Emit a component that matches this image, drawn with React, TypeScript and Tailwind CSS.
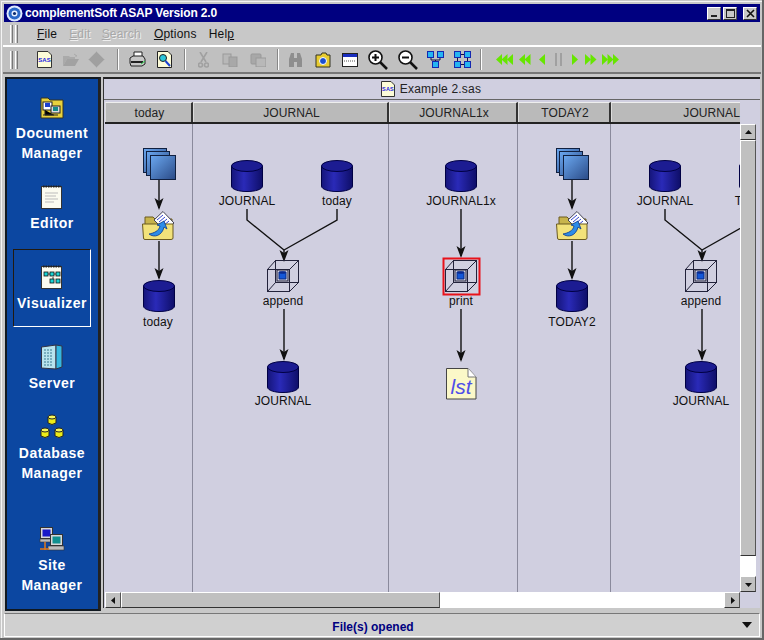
import type { ReactNode } from "react";

const raised = "border border-t-white border-l-white border-r-[#555] border-b-[#333]";

function Cylinder({ size = 32 }: { size?: number }) {
  return (
    <svg width={size} height={size} viewBox="0 0 32 32">
      <defs>
        <linearGradient id="cyl" x1="0" x2="1" y1="0" y2="0">
          <stop offset="0" stopColor="#15157a" />
          <stop offset="0.4" stopColor="#2a2ab8" />
          <stop offset="1" stopColor="#0e0e68" />
        </linearGradient>
      </defs>
      <path d="M0.5 6 V26 C0.5 29.5 8 31.5 16 31.5 S31.5 29.5 31.5 26 V6 Z" fill="url(#cyl)" stroke="#000044" />
      <ellipse cx="16" cy="6" rx="15.5" ry="5.5" fill="#1c1c92" stroke="#000044" />
    </svg>
  );
}

function Cube() {
  return (
    <svg width="33" height="33" viewBox="0 0 33 33" fill="none" stroke="#22223a" strokeWidth="1">
      <rect x="8.5" y="0.5" width="23" height="22" />
      <rect x="0.5" y="9.5" width="22" height="22" />
      <path d="M0.5 9.5 L8.5 0.5 M22.5 9.5 L31.5 0.5 M0.5 31.5 L8.5 22.5 M22.5 31.5 L31.5 22.5" />
      <rect x="10" y="10" width="11" height="11" stroke="#22223a" />
      <path d="M12 12 H19 V19 H12 Z" fill="#1457d8" stroke="#0a2a80" />
      <ellipse cx="15.5" cy="12.5" rx="3.5" ry="1.3" fill="#0a2a90" stroke="none" />
    </svg>
  );
}

function Stack() {
  return (
    <svg width="33" height="33" viewBox="0 0 33 33">
      <defs>
        <linearGradient id="stk" x1="0" x2="1" y1="0" y2="1">
          <stop offset="0" stopColor="#6ba8f0" />
          <stop offset="1" stopColor="#2a4a86" />
        </linearGradient>
      </defs>
      <rect x="0.5" y="0.5" width="23" height="24" fill="url(#stk)" stroke="#102040" />
      <rect x="3.5" y="3.5" width="23" height="24" fill="url(#stk)" stroke="#102040" />
      <rect x="7.5" y="7.5" width="25" height="24" fill="url(#stk)" stroke="#102040" />
    </svg>
  );
}

function OpenFolder() {
  return (
    <svg width="33" height="30" viewBox="0 0 33 30">
      <path d="M3 6 H11 L13 8 H30 V26 H3 Z" fill="#c8b44c" stroke="#6a5a20" />
      <path d="M12 9 L21 0.5 L32 12 L23 20 Z" fill="#fff" stroke="#445" />
      <path d="M15 9 L21 4 M17 11 L23 6 M19 13 L25 8 M21 15 L27 10" stroke="#3344cc" />
      <path d="M0.5 13 H31 V27 Q31 28.5 29 28.5 H3 Q1.5 28.5 1.5 27 Z" fill="#f2e27a" stroke="#6a5a20" />
      <path d="M7 23 C12 27 20 25 22 16 L25 18 L22 10 L15 14 L18 15 C17 20 12 22 7 23 Z" fill="#2d8ce8" stroke="#0b3a8a" strokeWidth="0.8" />
    </svg>
  );
}

function LstDoc() {
  return (
    <svg width="31" height="32" viewBox="0 0 31 32">
      <path d="M0.5 0.5 H22 L30 9 V31 H0.5 Z" fill="#fbf8c8" stroke="#444" />
      <path d="M22 0.5 V9 H30" fill="#fff" stroke="#777" />
      <text x="15" y="26" textAnchor="middle" fontFamily="'Liberation Sans', sans-serif" fontStyle="italic" fontSize="21" fill="#4f4fe8">lst</text>
    </svg>
  );
}

function Folder() {
  return (
    <svg width="24" height="24" viewBox="0 0 24 24">
      <path d="M1 3 H8 L10 5 H23 V23 H1 Z" fill="#e8d23c" stroke="#332" />
      <rect x="3" y="7" width="9" height="8" fill="#fff" stroke="#222" />
      <rect x="5" y="8" width="5" height="4" fill="#1a3fd0" />
      <rect x="11" y="11" width="9" height="7" fill="#ddd" stroke="#222" />
      <rect x="13" y="12" width="5" height="4" fill="#138a8a" />
      <path d="M5 15 V20 H14 M3 20 H18" stroke="#222" />
    </svg>
  );
}

function Notebook({ flow = false }: { flow?: boolean }) {
  return (
    <svg width="22" height="24" viewBox="0 0 22 24">
      <rect x="0.5" y="1.5" width="20" height="22" fill="#fbfbf0" stroke="#333" />
      <path d="M2 1.5 H20" stroke="#222" strokeWidth="2" strokeDasharray="1.5 1" />
      {flow ? (
        <g fill="#19d4d4" stroke="#111" strokeWidth="0.8">
          <path d="M7 9 H11 M15 9 H13 M12 12 V15" fill="none" />
          <rect x="3" y="7" width="4" height="4" />
          <rect x="9" y="7" width="4" height="4" />
          <rect x="15" y="7" width="4" height="4" />
          <rect x="9" y="14" width="4" height="4" />
          <rect x="15" y="14" width="4" height="4" />
        </g>
      ) : (
        <path d="M4 8 H17 M4 11 H15 M4 14 H17 M4 17 H13" stroke="#bbb" />
      )}
    </svg>
  );
}

function ServerIcon() {
  return (
    <svg width="22" height="26" viewBox="0 0 22 26">
      <path d="M0.5 3 L15 1 V25 L0.5 24 Z" fill="#b8e4ee" stroke="#334" />
      <path d="M15 1 L21 2 V23 L15 25 Z" fill="#35b7e0" stroke="#334" />
      <path d="M3 6 H12 M3 9 H12 M3 12 H12 M3 15 H12 M3 18 H12 M3 21 H12" stroke="#3a7a90" strokeDasharray="2 1" />
    </svg>
  );
}

function DbIcon() {
  const can = (x: number, y: number) => (
    <g key={`${x}-${y}`}>
      <path d={`M${x} ${y + 2} V${y + 8} Q${x + 4} ${y + 11} ${x + 8} ${y + 8} V${y + 2} Z`} fill="#ecec18" stroke="#222" />
      <ellipse cx={x + 4} cy={y + 2} rx="4" ry="2" fill="#f7f75a" stroke="#222" />
    </g>
  );
  return (
    <svg width="24" height="26" viewBox="0 0 24 26">
      {can(8, 1)}
      {can(1, 14)}
      {can(15, 14)}
    </svg>
  );
}

function SiteIcon() {
  return (
    <svg width="26" height="26" viewBox="0 0 26 26">
      <rect x="1.5" y="1.5" width="12" height="11" fill="#d8d8d8" stroke="#333" />
      <rect x="3.5" y="3.5" width="8" height="7" fill="#1818c8" />
      <rect x="1" y="13" width="12" height="3" fill="#bbb" stroke="#333" strokeWidth="0.6" />
      <rect x="11.5" y="8.5" width="12" height="11" fill="#d8d8d8" stroke="#333" />
      <rect x="13.5" y="10.5" width="8" height="7" fill="#109090" />
      <rect x="9" y="20" width="16" height="4" fill="#bbb" stroke="#333" strokeWidth="0.6" />
      <path d="M6 16 V24 M1 23 H10" stroke="#e07818" strokeWidth="1.5" />
    </svg>
  );
}

type NavItem = { lines: string[]; icon: ReactNode; height: string; active?: boolean };

const navItems: NavItem[] = [
  { lines: ["Document", "Manager"], icon: <Folder />, height: "h-[90px]" },
  { lines: ["Editor"], icon: <Notebook />, height: "h-[80px]" },
  { lines: ["Visualizer"], icon: <Notebook flow />, height: "h-[78px] mb-[2px]", active: true },
  { lines: ["Server"], icon: <ServerIcon />, height: "h-[70px]" },
  { lines: ["Database", "Manager"], icon: <DbIcon />, height: "h-[112px]" },
  { lines: ["Site", "Manager"], icon: <SiteIcon />, height: "h-[90px]" },
];

function Sidebar() {
  return (
    <div className="mb-[2px] flex w-[96px] shrink-0 flex-col overflow-hidden border-2 border-r-[3px] border-[#101820] border-r-[#222] bg-[#0c47a1]">
      {navItems.map((item) => (
        <div
          key={item.lines[0]}
          className={`mx-[6px] flex w-[78px] shrink-0 flex-col items-center pt-[15px] ${item.height} ${
            item.active ? "border border-t-[#221a10] border-l-[#221a10] border-r-white border-b-white" : "border border-transparent"
          }`}
        >
          <div className="flex h-[24px] items-center justify-center">{item.icon}</div>
          <div className="mt-[4px] text-center text-[14px] leading-[20px] font-bold tracking-[0.5px] whitespace-nowrap text-white">
            {item.lines.map((l) => (
              <div key={l}>{l}</div>
            ))}
          </div>
        </div>
      ))}
    </div>
  );
}

function Arrows({ n, dir }: { n: number; dir: 1 | -1 }) {
  const step = 5.5;
  const w = n * step + 1;
  return (
    <svg width={w} height="13" viewBox={`0 0 ${w} 13`}>
      {Array.from({ length: n }, (_, i) => {
        const x = i * step;
        const d = dir === 1 ? `M${x} 1 L${x + 6} 6.5 L${x} 12 Z` : `M${x + 6} 1 L${x} 6.5 L${x + 6} 12 Z`;
        return <path key={i} d={d} fill="#66e600" />;
      })}
    </svg>
  );
}

function Sep({ ml = "ml-[12px]" }: { ml?: string }) {
  return <div className={`${ml} h-[21px] w-[2px] border-r border-l border-r-white border-l-[#888]`} />;
}

function Tool({ ml, children }: { ml: string; children: ReactNode }) {
  return <div className={`flex h-[20px] items-center justify-center ${ml}`}>{children}</div>;
}

function Grip() {
  return (
    <div className="ml-[7px] flex gap-[2px]">
      <div className="h-[18px] w-[3px] border-r border-l border-r-[#777] border-l-white" />
      <div className="h-[18px] w-[3px] border-r border-l border-r-[#777] border-l-white" />
    </div>
  );
}

function Magnifier({ plus }: { plus: boolean }) {
  return (
    <svg width="20" height="20" viewBox="0 0 20 20" fill="none">
      <path d="M11 11 L19 19" stroke="#111" strokeWidth="2.5" />
      <circle cx="7.5" cy="7.5" r="6.5" fill="#fff" stroke="#111" strokeWidth="1.6" />
      <path d={plus ? "M4 7.5 H11 M7.5 4 V11" : "M4 7.5 H11"} stroke="#111" strokeWidth="2" />
    </svg>
  );
}

function Toolbar() {
  return (
    <div className="flex h-[29px] items-center border-t-2 border-b-2 border-t-white border-b-[#777] bg-[#c0c0c0]">
      <Grip />
      <Tool ml="ml-[19px]">
        <svg width="15" height="17" viewBox="0 0 15 17">
          <path d="M0.5 0.5 H11 L14.5 4 V16.5 H0.5 Z" fill="#fdfcd8" stroke="#333" />
          <text x="7.5" y="10.5" textAnchor="middle" fontSize="6" fontWeight="700" fontFamily="'Liberation Sans', sans-serif" fill="#1a1ae0">SAS</text>
        </svg>
      </Tool>
      <Tool ml="ml-[10px]">
        <svg width="17" height="14" viewBox="0 0 17 14">
          <path d="M1 3 H7 L8 4 H13 V6 H5 L1 13 Z" fill="#aaa" />
          <path d="M5 6 H17 L13 13 H1 Z" fill="#a2a2a2" />
          <path d="M12 1 L15 3 L13 3" fill="none" stroke="#aaa" />
        </svg>
      </Tool>
      <Tool ml="ml-[9px]">
        <svg width="17" height="17" viewBox="0 0 17 17">
          <path d="M8.5 0.5 L16.5 8.5 L8.5 16.5 L0.5 8.5 Z" fill="#a0a0a0" stroke="#b4b4b4" />
        </svg>
      </Tool>
      <Sep />
      <Tool ml="ml-[10px]">
        <svg width="17" height="17" viewBox="0 0 17 17">
          <path d="M5 1 H13 V6 H5 Z" fill="#fff" stroke="#222" />
          <path d="M1 7 L4 5 H14 L16 8 V13 L13 15 H2 L1 12 Z" fill="#c8c8c8" stroke="#222" />
          <path d="M2 11 H14" stroke="#222" strokeWidth="2" />
          <path d="M12 13 L16 10" stroke="#2c4" />
        </svg>
      </Tool>
      <Tool ml="ml-[11px]">
        <svg width="15" height="17" viewBox="0 0 15 17">
          <path d="M0.5 0.5 H11 L14.5 4 V16.5 H0.5 Z" fill="#fdfcd8" stroke="#222" />
          <circle cx="6" cy="7" r="3.5" fill="#2cc7d8" stroke="#222" />
          <path d="M8.5 10 L13 15" stroke="#1a3fd0" strokeWidth="2" />
        </svg>
      </Tool>
      <Sep />
      <Tool ml="ml-[12px]">
        <svg width="11" height="16" viewBox="0 0 11 16" fill="none" stroke="#a0a0a0" strokeWidth="1.6">
          <path d="M2 0 L8 10 M9 0 L3 10" />
          <circle cx="2.5" cy="13" r="2" />
          <circle cx="8.5" cy="13" r="2" />
        </svg>
      </Tool>
      <Tool ml="ml-[13px]">
        <svg width="16" height="14" viewBox="0 0 16 14">
          <rect x="1" y="1" width="8" height="10" fill="#b8b8b8" stroke="#999" />
          <rect x="7" y="4" width="8" height="10" fill="#a8a8a8" stroke="#999" />
        </svg>
      </Tool>
      <Tool ml="ml-[12px]">
        <svg width="16" height="14" viewBox="0 0 16 14">
          <rect x="1" y="1" width="10" height="10" rx="1" fill="#a8a8a8" stroke="#999" />
          <rect x="6" y="5" width="10" height="9" fill="#b8b8b8" stroke="#999" />
        </svg>
      </Tool>
      <Sep ml="ml-[11px]" />
      <Tool ml="ml-[9px]">
        <svg width="15" height="16" viewBox="0 0 15 16">
          <path d="M1 7 L3 1 H6 V6 H9 V1 H12 L14 7 V15 H9 V10 H6 V15 H1 Z" fill="#8e8e8e" />
        </svg>
      </Tool>
      <Tool ml="ml-[12px]">
        <svg width="16" height="16" viewBox="0 0 16 16">
          <path d="M1 3 H6 L7 1 H11 L12 3 H15 V15 H1 Z" fill="#e8cc30" stroke="#332" />
          <circle cx="8" cy="9" r="3.5" fill="#1a4fd0" stroke="#fff" />
        </svg>
      </Tool>
      <Tool ml="ml-[11px]">
        <svg width="16" height="14" viewBox="0 0 16 14">
          <rect x="0.5" y="0.5" width="15" height="13" fill="#fff" stroke="#222" />
          <rect x="1" y="1" width="14" height="3" fill="#1a2fc0" />
          <path d="M2 8 H14" stroke="#555" strokeDasharray="1 1" />
        </svg>
      </Tool>
      <Tool ml="ml-[10px]">
        <Magnifier plus />
      </Tool>
      <Tool ml="ml-[10px]">
        <Magnifier plus={false} />
      </Tool>
      <Tool ml="ml-[9px]">
        <svg width="17" height="17" viewBox="0 0 17 17">
          <path d="M4 6 V9 H13 V6 M8.5 9 V11" stroke="#114" fill="none" />
          <rect x="0.5" y="0.5" width="6" height="6" fill="#25b5f2" stroke="#1427b0" />
          <rect x="10.5" y="0.5" width="6" height="6" fill="#25b5f2" stroke="#1427b0" />
          <rect x="5.5" y="10.5" width="6" height="6" fill="#25b5f2" stroke="#1427b0" />
        </svg>
      </Tool>
      <Tool ml="ml-[10px]">
        <svg width="17" height="17" viewBox="0 0 17 17">
          <path d="M7 3.5 H10 M3.5 7 V10 M13.5 7 V10 M7 13.5 H10" stroke="#114" fill="none" />
          <rect x="0.5" y="0.5" width="6" height="6" fill="#25b5f2" stroke="#1427b0" />
          <rect x="10.5" y="0.5" width="6" height="6" fill="#25b5f2" stroke="#1427b0" />
          <rect x="0.5" y="10.5" width="6" height="6" fill="#25b5f2" stroke="#1427b0" />
          <rect x="10.5" y="10.5" width="6" height="6" fill="#25b5f2" stroke="#1427b0" />
        </svg>
      </Tool>
      <Sep ml="ml-[9px]" />
      <Tool ml="ml-[14px]">
        <Arrows n={3} dir={-1} />
      </Tool>
      <Tool ml="ml-[5px]">
        <Arrows n={2} dir={-1} />
      </Tool>
      <Tool ml="ml-[8px]">
        <Arrows n={1} dir={-1} />
      </Tool>
      <Tool ml="ml-[10px]">
        <div className="flex gap-[3px]">
          <div className="h-[13px] w-[2px] bg-[#a0a0a0]" />
          <div className="h-[13px] w-[2px] bg-[#a0a0a0]" />
        </div>
      </Tool>
      <Tool ml="ml-[10px]">
        <Arrows n={1} dir={1} />
      </Tool>
      <Tool ml="ml-[6px]">
        <Arrows n={2} dir={1} />
      </Tool>
      <Tool ml="ml-[5px]">
        <Arrows n={3} dir={1} />
      </Tool>
    </div>
  );
}

function Menu() {
  const items = [
    { label: "File", key: "F", ml: "ml-[19px]" },
    { label: "Edit", key: "E", ml: "ml-[12px]", off: true },
    { label: "Search", key: "S", ml: "ml-[11px]", off: true },
    { label: "Options", key: "O", ml: "ml-[13px]" },
    { label: "Help", key: "p", ml: "ml-[12px]" },
  ];
  return (
    <div className="flex h-[23px] items-center bg-[#c8c8c8] pt-[1px]">
      <Grip />
      {items.map((m) => {
        const i = m.label.indexOf(m.key);
        return (
          <span
            key={m.label}
            className={`${m.ml} text-[12px] tracking-[0.2px] ${m.off ? "text-[#a8a8a8] [text-shadow:1px_1px_0_#eee]" : "text-[#111]"}`}
          >
            {m.label.slice(0, i)}
            <span className="underline">{m.key}</span>
            {m.label.slice(i + 1)}
          </span>
        );
      })}
    </div>
  );
}

const columns = [
  { label: "today", w: "w-[88px]", align: "justify-center pl-[2px]" },
  { label: "JOURNAL", w: "w-[196px]", align: "justify-center pl-[2px]" },
  { label: "JOURNAL1x", w: "w-[129px]", align: "justify-center pl-[2px]" },
  { label: "TODAY2", w: "w-[93px]", align: "justify-center pl-[2px]" },
  { label: "JOURNAL", w: "flex-1", align: "justify-end" },
];

type DiagNode = { x: number; y: number; el: ReactNode };
type DiagLabel = { x: number; y: number; text: string };

// page coordinates, shifted by the canvas origin (105,124)
const ox = 105;
const oy = 124;

const nodes: DiagNode[] = [
  { x: 143, y: 148, el: <Stack /> },
  { x: 142, y: 211, el: <OpenFolder /> },
  { x: 143, y: 280, el: <Cylinder /> },
  { x: 231, y: 160, el: <Cylinder /> },
  { x: 321, y: 160, el: <Cylinder /> },
  { x: 267, y: 260, el: <Cube /> },
  { x: 267, y: 361, el: <Cylinder /> },
  { x: 445, y: 160, el: <Cylinder /> },
  { x: 445, y: 260, el: <Cube /> },
  { x: 446, y: 368, el: <LstDoc /> },
  { x: 556, y: 148, el: <Stack /> },
  { x: 556, y: 211, el: <OpenFolder /> },
  { x: 556, y: 280, el: <Cylinder /> },
  { x: 649, y: 160, el: <Cylinder /> },
  { x: 739, y: 160, el: <Cylinder /> },
  { x: 685, y: 260, el: <Cube /> },
  { x: 685, y: 361, el: <Cylinder /> },
];

const labels: DiagLabel[] = [
  { x: 158, y: 322, text: "today" },
  { x: 247, y: 201, text: "JOURNAL" },
  { x: 337, y: 201, text: "today" },
  { x: 283, y: 301, text: "append" },
  { x: 283, y: 401, text: "JOURNAL" },
  { x: 461, y: 201, text: "JOURNAL1x" },
  { x: 461, y: 301, text: "print" },
  { x: 572, y: 322, text: "TODAY2" },
  { x: 665, y: 201, text: "JOURNAL" },
  { x: 755, y: 201, text: "TODAY" },
  { x: 701, y: 301, text: "append" },
  { x: 701, y: 401, text: "JOURNAL" },
];

const lines = [
  "M159 180 V208",
  "M159 241 V278",
  "M247 209 V220 L284 250",
  "M337 209 V220 L284 250",
  "M284 250 V258",
  "M284 309 V359",
  "M461 209 V256",
  "M461 309 V360",
  "M572 180 V208",
  "M572 241 V278",
  "M665 209 V220 L702 250",
  "M755 209 V220 L702 250",
  "M702 250 V258",
  "M702 309 V359",
];

const arrowHeads: [number, number][] = [
  [159, 210],
  [159, 280],
  [284, 262],
  [284, 361],
  [461, 258],
  [461, 362],
  [572, 210],
  [572, 280],
  [702, 262],
  [702, 361],
];

function Canvas() {
  return (
    <div className="relative flex-1 overflow-hidden bg-[#d0cfe0]">
      <div className="absolute inset-0 flex">
        {columns.map((c, i) => (
          <div key={i} className={`${c.w} ${i < 4 ? "border-r border-r-[#8a8a9c]" : ""}`} />
        ))}
      </div>
      <svg className="absolute inset-0" width="635" height="468" viewBox={`${ox} ${oy} 635 468`} fill="none">
        {lines.map((d) => (
          <path key={d} d={d} stroke="#111" strokeWidth="1.4" />
        ))}
        {arrowHeads.map(([x, y]) => (
          <path key={`${x}-${y}`} d={`M${x - 4.5} ${y - 12} L${x} ${y - 9} L${x + 4.5} ${y - 12} L${x} ${y} Z`} fill="#111" />
        ))}
        <rect x="443.5" y="258.5" width="36" height="36" stroke="#e8121a" strokeWidth="2" />
      </svg>
      {nodes.map((n, i) => (
        <div key={i} className="absolute" style={{ left: n.x - ox, top: n.y - oy }}>
          {n.el}
        </div>
      ))}
      {labels.map((l, i) => (
        <div
          key={i}
          className="absolute -translate-x-1/2 -translate-y-1/2 text-[12px] leading-[14px] tracking-[0.1px] whitespace-nowrap text-[#111]"
          style={{ left: l.x - ox, top: l.y - oy }}
        >
          {l.text}
        </div>
      ))}
    </div>
  );
}

function ScrollBtn({ dir, className = "" }: { dir: "up" | "down" | "left" | "right"; className?: string }) {
  const d = {
    up: "M1 6 L4.5 2 L8 6 Z",
    down: "M1 3 L8 3 L4.5 7 Z",
    left: "M6 1 L6 8 L2 4.5 Z",
    right: "M3 1 L3 8 L7 4.5 Z",
  }[dir];
  return (
    <div className={`flex h-[16px] w-[16px] shrink-0 items-center justify-center bg-[#c0c0c0] ${raised} ${className}`}>
      <svg width="9" height="9" viewBox="0 0 9 9">
        <path d={d} fill="#111" />
      </svg>
    </div>
  );
}

function MainPanel() {
  return (
    <div className="mb-[5px] ml-[2px] flex flex-1 flex-col border-t-2 border-l border-t-[#222] border-l-[#333] bg-[#d0cfe0]">
      <div className="flex h-[21px] shrink-0 items-center justify-center border-b border-b-[#666] pr-[2px] text-[12px] tracking-[0.2px] text-[#222]">
        <svg className="mr-[5px]" width="14" height="16" viewBox="0 0 14 16">
          <path d="M0.5 0.5 H10 L13.5 4 V15.5 H0.5 Z" fill="#fdfcd8" stroke="#333" />
          <text x="7" y="10" textAnchor="middle" fontSize="5.5" fontWeight="700" fontFamily="'Liberation Sans', sans-serif" fill="#1a1ae0">SAS</text>
        </svg>
        Example 2.sas
      </div>
      <div className="flex flex-1 flex-col pt-[2px] pl-[1px]">
        <div className="flex h-[22px] w-[635px] shrink-0 border-b-2 border-b-[#222]">
          {columns.map((c, i) => (
            <div
              key={i}
              className={`flex ${c.w} ${c.align} items-center border-t border-l border-t-[#eee] border-l-[#ddd] bg-[#bababa] text-[12px] tracking-[0.1px] text-[#222] ${
                i < 4 ? "border-r-2 border-r-[#333]" : ""
              }`}
            >
              {c.label}
            </div>
          ))}
        </div>
        <div className="flex flex-1">
          <div className="flex w-[635px] flex-col">
            <Canvas />
            <div className="flex h-[16px] shrink-0 items-stretch bg-white">
              <ScrollBtn dir="left" />
              <div className={`h-[16px] w-[319px] bg-[#c0c0c0] ${raised}`} />
              <div className="flex-1" />
              <ScrollBtn dir="right" />
            </div>
          </div>
          <div className="flex w-[16px] flex-col pb-[16px]">
            <ScrollBtn dir="up" />
            <div className={`h-[416px] w-[16px] shrink-0 bg-[#c0c0c0] ${raised}`} />
            <div className="flex-1 bg-white" />
            <ScrollBtn dir="down" />
          </div>
        </div>
      </div>
    </div>
  );
}

export default function App() {
  return (
    <div className="flex h-[640px] w-[764px] flex-col overflow-hidden bg-[#c8c8c8] p-[3px] font-['Liberation_Sans',Arial,sans-serif] shadow-[inset_-2px_-2px_0_#666,inset_1px_1px_0_#c8c8c8,inset_2px_2px_0_#f4f4f4]">
      <div className="mx-[1px] mt-[1px] flex h-[18px] shrink-0 items-center bg-[#000080]">
        <svg className="ml-[2px]" width="17" height="17" viewBox="0 0 17 17">
          <circle cx="8.5" cy="8.5" r="8" fill="#dde8ff" />
          <circle cx="8.5" cy="8.5" r="6" fill="#2a68c8" />
          <circle cx="8.5" cy="8.5" r="3" fill="#eaf2ff" />
          <circle cx="8.5" cy="8.5" r="1.6" fill="#0a2a70" />
        </svg>
        <span className="ml-[2px] text-[12px] font-bold tracking-[-0.15px] text-white">complementSoft ASAP Version 2.0</span>
        <div className="mr-[3px] ml-auto flex gap-[2px]">
          <div className={`flex h-[13px] w-[14px] items-end justify-center bg-[#c8c8c8] pb-[2px] ${raised}`}>
            <div className="h-[2px] w-[6px] bg-[#222]" />
          </div>
          <div className={`mr-[4px] flex h-[13px] w-[14px] items-center justify-center bg-[#c8c8c8] ${raised}`}>
            <div className="h-[9px] w-[9px] border border-t-2 border-[#222]" />
          </div>
          <div className={`flex h-[13px] w-[14px] items-center justify-center bg-[#c8c8c8] ${raised}`}>
            <svg width="9" height="9" viewBox="0 0 9 9">
              <path d="M1 1 L8 8 M8 1 L1 8" stroke="#111" strokeWidth="1.6" />
            </svg>
          </div>
        </div>
      </div>
      <Menu />
      <Toolbar />
      <div className="flex min-h-0 flex-1 pt-[3px] pr-[1px] pl-[2px]">
        <Sidebar />
        <MainPanel />
      </div>
      <div className="mx-[1px] flex h-[24px] shrink-0 items-center border-t border-r border-b border-l border-t-[#777] border-r-white border-b-white border-l-white bg-[#d0d0d0] pl-[238px]">
        <span className="mt-[3px] w-[260px] text-center text-[12px] font-bold text-[#000080]">File(s) opened</span>
        <svg className="mr-[6px] ml-auto" width="12" height="8" viewBox="0 0 12 8">
          <path d="M1 1 H11 L6 7 Z" fill="#111" />
        </svg>
      </div>
    </div>
  );
}
